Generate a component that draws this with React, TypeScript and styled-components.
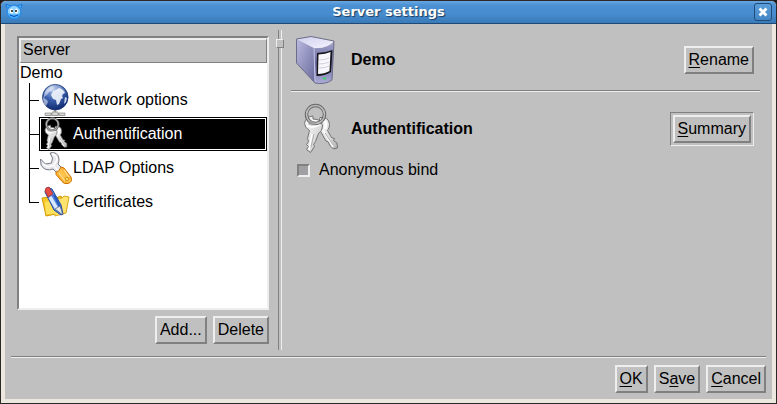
import React, { useState } from 'react';
import styled, { createGlobalStyle, css } from 'styled-components';

const GlobalStyle = createGlobalStyle`
  * { box-sizing: border-box; }
  body { margin: 0; background: #1c1a1c; }
  button, input { font: inherit; color: inherit; margin: 0; }
  svg { display: block; flex: none; overflow: visible; }
`;

const face = '#c0c0c0';
const light = '#eeeeee';
const dark = '#808080';

const raised = css`
  border: 2px solid;
  border-color: ${light} ${dark} ${dark} ${light};
`;

const Window = styled.div`
  min-height: 100vh;
  display: flex;
  flex-direction: column;
  border: 1px solid #2c2828;
  border-radius: 6px 6px 0 0;
  background: #ece8e0;
  font-family: 'Liberation Sans', Arial, sans-serif;
  font-size: 16px;
  line-height: 20px;
  color: #000;
`;

const TitleBar = styled.header`
  display: flex;
  align-items: center;
  justify-content: space-between;
  height: 23px;
  padding: 0 4px;
  border-bottom: 1px solid #1f4a78;
  border-radius: 5px 5px 0 0;
  background: linear-gradient(#68a8e2, #4a90d2 20%, #468cce 60%, #3a7ab8);
`;

const Title = styled.h1`
  margin: 0;
  font: bold 13px/20px 'DejaVu Sans', sans-serif;
  color: #fff;
  text-shadow: 1px 1px 1px #1c3c60;
`;

const CloseButton = styled.button`
  display: grid;
  place-items: center;
  width: 18px;
  height: 18px;
  padding: 0;
  border: 1px solid #1f4a78;
  border-radius: 3px;
  background: linear-gradient(#5a9edc, #4286c6);
`;

const Client = styled.main`
  flex: 1;
  display: flex;
  flex-direction: column;
  margin: 0 4px 4px;
  padding: 6px;
  background: ${face};
`;

const Panes = styled.div`
  flex: 1;
  display: flex;
`;

const Sidebar = styled.nav`
  display: flex;
  flex-direction: column;
  gap: 6px;
  width: 265px;
  padding: 6px 7px 6px 6px;
`;

const Tree = styled.div`
  flex: 1;
  border: 2px solid;
  border-color: ${dark} ${light} ${light} ${dark};
  background: #fff;
`;

const TreeHeader = styled.div`
  ${raised}
  border-right-width: 1px;
  border-bottom-width: 1px;
  padding: 0 2px 2px;
  background: ${face};
`;

const TreeRoot = styled.div`
  height: 20px;
  padding-left: 1px;
`;

const TreeList = styled.ul`
  list-style: none;
  margin: 0;
  padding: 0 0 0 10px;
`;

const TreeRow = styled.li`
  display: flex;
  height: 34px;
`;

const Connector = styled.span<{ $last: boolean }>`
  display: flex;
  flex-direction: column;
  width: 10px;
  &::before,
  &::after {
    content: '';
    flex: 1;
    border-left: 1px solid #000;
  }
  &::before { border-bottom: 1px solid #000; }
  &::after { border-left-color: ${(p) => (p.$last ? 'transparent' : '#000')}; }
`;

const TreeItem = styled.button<{ $selected: boolean }>`
  flex: 1;
  display: flex;
  align-items: center;
  gap: 1px;
  padding: 0;
  border: 1px solid ${(p) => (p.$selected ? '#000' : 'transparent')};
  box-shadow: ${(p) => (p.$selected ? 'inset 0 0 0 1px #fff' : 'none')};
  background: ${(p) => (p.$selected ? '#000' : 'transparent')};
  color: ${(p) => (p.$selected ? '#fff' : '#000')};
  text-align: left;
`;

const ButtonRow = styled.div`
  display: flex;
  justify-content: flex-end;
  gap: 6px;
`;

const Button = styled.button`
  ${raised}
  padding: 2px 3px;
  background: ${face};
  line-height: 20px;
  u {
    text-decoration-thickness: 1px;
    text-underline-offset: 2px;
    text-decoration-skip-ink: none;
  }
`;

const DefaultRing = styled.span`
  display: flex;
  padding: 2px;
  border: 1px solid;
  border-color: ${dark} ${light} ${light} ${dark};
`;

const Splitter = styled.div`
  display: flex;
  flex-direction: column;
  align-items: center;
  width: 8px;
  &::before,
  &::after {
    content: '';
    width: 2px;
    height: 9px;
    border-left: 1px solid ${dark};
    border-right: 1px solid ${light};
  }
  &::after { flex: 1; }
`;

const Grip = styled.span`
  width: 8px;
  height: 9px;
  border: 1px solid;
  border-color: ${light} ${dark} ${dark} ${light};
`;

const Details = styled.section`
  flex: 1;
  padding: 6px 6px 0 7px;
`;

const Rule = styled.hr`
  width: 100%;
  margin: 0;
  border: 0;
  border-top: 1px solid ${dark};
  border-bottom: 1px solid ${light};
`;

const Heading = styled.div`
  display: flex;
  align-items: center;
  gap: 6px;
  padding: 0 6px 6px;
`;

const HeadingText = styled.h2`
  flex: 1;
  margin: 0;
  font-size: 16px;
  line-height: 20px;
`;

const Section = styled.div`
  padding-top: 13px;
`;

const CheckLabel = styled.label`
  display: flex;
  align-items: center;
  gap: 9px;
  padding: 1px 6px;
`;

const CheckBox = styled.input`
  appearance: none;
  width: 13px;
  height: 13px;
  border: 2px solid;
  border-color: ${dark} ${light} ${light} ${dark};
  background: #a0a0a4;
  &:checked { background: #303030; }
`;

const Footer = styled.footer`
  display: flex;
  flex-direction: column;
  gap: 7px;
  padding-top: 6px;
`;

const Mascot = () => (
  <svg width="18" height="18" viewBox="0 0 18 18" aria-hidden="true">
    <path d="M2 5L1 1l4 2M16 5l1-4-4 2" fill="#4bb0ff" stroke="#1a78dc" />
    <circle cx="9" cy="9" r="7" fill="#42aaff" stroke="#2585e4" />
    <path d="M3 7q6-8 12 0v3q-6 3-12 0z" fill="#92d4ff" />
    <ellipse cx="6.5" cy="8" rx="1.500" ry="2.500" fill="#fff" />
    <ellipse cx="11.5" cy="8" rx="1.500" ry="2.500" fill="#fff" />
    <circle cx="7" cy="8" r="1" fill="#111" />
    <circle cx="11" cy="8" r="1" fill="#111" />
    <path d="M5 12q4 3 8 0" fill="none" stroke="#0b50b0" />
  </svg>
);

const CloseIcon = () => (
  <svg width="10" height="10" viewBox="0 0 10 10" aria-hidden="true">
    <path d="M1.500 1.500l7 7m0-7l-7 7" stroke="#fff" strokeWidth="2.800" />
  </svg>
);

const GlobeIcon = () => (
  <svg width="32" height="32" viewBox="0 0 32 32" aria-hidden="true">
    <defs>
      <radialGradient id="sea" cx="0.4" cy="0.2" r="0.85">
        <stop offset="0" stopColor="#a9bfe6" />
        <stop offset="0.45" stopColor="#3d62b0" />
        <stop offset="1" stopColor="#0b2468" />
      </radialGradient>
    </defs>
    <path d="M15 26v4M6 30.300h19" stroke="#a5a7a3" strokeWidth="2.500" />
    <path d="M5 29h6v2.500H5zM19 29h6v2.500h-6zM12 28h6v3.500h-6z" fill="#d5d7d3" stroke="#858784" strokeWidth="0.700" />
    <circle cx="15.300" cy="13.200" r="12.800" fill="url(#sea)" stroke="#132e70" strokeWidth="0.700" />
    <path d="M5 8q3-5 8-6l1 2-2 2 0 1-3 1-2 3-2 1-1 2 3 2 1 2-2 4q-3-3-3-7z" fill="#dfe7f5" opacity="0.600" />
    <path d="M13 7l3-1 3-2q4 1 6 5l-2 1-1 2 1 2-2 1-2 5-2 1-1-5-3-1-2-4z" fill="#eef3fb" opacity="0.920" />
    <path d="M25 13l2 1-1 4-2 2z" fill="#cbd9f0" />
    <path d="M4 10Q7 1 15 1t11 8Q15 4 4 10z" fill="#fff" opacity="0.250" />
  </svg>
);

const KeysIcon = ({ size }: { size: number }) => (
  <svg width={size} height={size} viewBox="0 0 48 48" aria-hidden="true">
    <defs>
      <linearGradient id="steel" x1="0" y1="0" x2="1" y2="1">
        <stop offset="0" stopColor="#fafafa" />
        <stop offset="0.600" stopColor="#dcdcdc" />
        <stop offset="1" stopColor="#b0b0b0" />
      </linearGradient>
    </defs>
    <g fill="url(#steel)" stroke="#747474" strokeLinejoin="round">
      <path d="M23 12.500q9-1 9.500 7 0 4-2 6l4 7 3 1-1 2 3.500 2.500.5 5-4 1-4-4-1-3-2.500-1-8-14z" />
      <path d="M16 14q9 0 9.500 7 0 5-4 7.500l-3 8-2 3 1 2-4 6-4-3 2-3-2-2 2-3-1-3 2-8q-5-3-5-7 1-7 8.500-7.500z" />
    </g>
    <path d="M26 25l10 17M15 29l-3 16" fill="none" stroke="#fff" strokeWidth="1.500" />
    <path d="M28 28l8 12M17 29l-3 13" fill="none" stroke="#b0b0b0" />
    <path d="M9.500 21q1-6 7-6t7 5q-7 5-14 1z" fill="#fff" />
    <path d="M25 15q6 1 3 9" fill="none" stroke="#fff" strokeWidth="2.500" />
    <circle cx="18.500" cy="9.500" r="9" fill="none" stroke="#686868" strokeWidth="3.500" />
    <circle cx="18.500" cy="9.500" r="9" fill="none" stroke="#bdbdbd" strokeWidth="1.500" />
    <path d="M12 15.500l-1 4q3 2 7 .5l1-3z" fill="#969696" opacity="0.650" />
  </svg>
);

const WrenchIcon = () => (
  <svg width="32" height="32" viewBox="0 0 32 32" aria-hidden="true">
    <defs>
      <linearGradient id="amber" x1="0" y1="1" x2="1" y2="0">
        <stop offset="0" stopColor="#ee8b08" />
        <stop offset="0.500" stopColor="#ffc54d" />
        <stop offset="1" stopColor="#f09010" />
      </linearGradient>
    </defs>
    <path d="M10 1q8-2 9 6 0 3-1 5l5 5-5 5-5-5q-8 3-12-4l-.5-6 5 5 6-1 1-5z" fill="#e8e8ec" stroke="#777b86" strokeLinejoin="round" />
    <path d="M12 2q5 1 5 6l-3 5-6 2-5-3M14 14l5 5" fill="none" stroke="#fff" strokeWidth="1.500" />
    <path d="M16 20q3 0 5-5l3 1 7 9q2 5-3 6.500-4 1-6-2l-6-7z" fill="url(#amber)" stroke="#ce7603" />
    <path d="M19 21l6 8M24 18l5 7" stroke="#ffe199" strokeWidth="1.200" />
    <circle cx="27" cy="27" r="1.700" fill="#ffe066" stroke="#bd7400" strokeWidth="0.700" />
  </svg>
);

const CertificateIcon = () => (
  <svg width="32" height="32" viewBox="0 0 32 32" aria-hidden="true">
    <path d="M2 12l8-1 3 2 8-3 5 16-20 4z" fill="#f7c928" stroke="#d29a08" />
    <path d="M15 13l7-1 2-2 5 1-3 16-11 3z" fill="#ffe36e" stroke="#dda719" />
    <path d="M5 16l10-2 8 14H6z" fill="#ffe05a" />
    <path d="M5 6q1-6 7-3l9 16 2 9-2 1-7-5z" fill="#5284df" stroke="#234b9f" />
    <path d="M10 11l7 12" stroke="#d9e8ff" strokeWidth="3.500" />
    <path d="M14 9l6 12" stroke="#2858ba" strokeWidth="2" />
    <path d="M5 5q0-4 4-4l4 7-5 3z" fill="#e84b42" stroke="#983039" strokeWidth="0.700" />
    <path d="M15 23l5-3 3 9z" fill="#e5e7ea" stroke="#53617b" strokeWidth="0.700" />
  </svg>
);

const ServerIcon = () => (
  <svg width="48" height="48" viewBox="0 0 48 48" aria-hidden="true">
    <defs>
      <linearGradient id="side" x1="0" y1="0" x2="1" y2="1">
        <stop offset="0" stopColor="#b9b9e0" />
        <stop offset="1" stopColor="#6a6a9b" />
      </linearGradient>
      <linearGradient id="front" x1="0" y1="0" x2="0" y2="1">
        <stop offset="0" stopColor="#a4a4cc" />
        <stop offset="0.500" stopColor="#6868a0" />
        <stop offset="1" stopColor="#aeaed8" />
      </linearGradient>
      <linearGradient id="lid" x1="0" y1="0" x2="1" y2="1">
        <stop offset="0" stopColor="#cfcfee" />
        <stop offset="1" stopColor="#f4f4ff" />
      </linearGradient>
    </defs>
    <path d="M-.5 3L17 12l1 35L-.5 27z" fill="url(#side)" />
    <path d="M17 12q12 1 20-6l-2 38q-7 5-17 3z" fill="url(#front)" />
    <path d="M-.5 3L14 .5 37 5q-7 8-20 7z" fill="url(#lid)" />
    <path d="M-.5 3L14 .5 37 5l-2 39q-7 5-17 3L-.5 27z" fill="none" stroke="#6c6c88" />
    <path d="M17 12l1 34" stroke="#c4c4e8" />
    <path d="M20 17q8 0 15.500-3L34 36q-6 4-14.500 4z" fill="#141419" />
    <path d="M21.500 18.500q7-.5 12-2.500l-1 19q-5 3-11.500 3z" fill="#f7f7fc" />
    <path d="M22 24q6 0 10-2M22 28q6 0 10-2M22 32q6 0 10-2" fill="none" stroke="#d0d0df" />
    <path d="M26 42.500h3" stroke="#3fd463" strokeWidth="2" />
  </svg>
);

const entries = [
  { label: 'Network options', icon: <GlobeIcon /> },
  { label: 'Authentification', icon: <KeysIcon size={32} /> },
  { label: 'LDAP Options', icon: <WrenchIcon /> },
  { label: 'Certificates', icon: <CertificateIcon /> },
];

export default function App() {
  const [selected, setSelected] = useState(1);
  return (
    <>
      <GlobalStyle />
      <Window>
        <TitleBar>
          <Mascot />
          <Title>Server settings</Title>
          <CloseButton aria-label="Close">
            <CloseIcon />
          </CloseButton>
        </TitleBar>
        <Client>
          <Panes>
            <Sidebar>
              <Tree>
                <TreeHeader>Server</TreeHeader>
                <TreeRoot>Demo</TreeRoot>
                <TreeList>
                  {entries.map((entry, i) => (
                    <TreeRow key={entry.label}>
                      <Connector $last={i === entries.length - 1} />
                      <TreeItem $selected={i === selected} onClick={() => setSelected(i)}>
                        {entry.icon}
                        {entry.label}
                      </TreeItem>
                    </TreeRow>
                  ))}
                </TreeList>
              </Tree>
              <ButtonRow>
                <Button>Add...</Button>
                <Button>Delete</Button>
              </ButtonRow>
            </Sidebar>
            <Splitter>
              <Grip />
            </Splitter>
            <Details>
              <Heading>
                <ServerIcon />
                <HeadingText>Demo</HeadingText>
                <Button><u>R</u>ename</Button>
              </Heading>
              <Rule />
              <Section>
                <Heading>
                  <KeysIcon size={48} />
                  <HeadingText>Authentification</HeadingText>
                  <DefaultRing>
                    <Button><u>S</u>ummary</Button>
                  </DefaultRing>
                </Heading>
                <CheckLabel>
                  <CheckBox type="checkbox" />
                  Anonymous bind
                </CheckLabel>
              </Section>
            </Details>
          </Panes>
          <Footer>
            <Rule />
            <ButtonRow>
              <Button><u>O</u>K</Button>
              <Button>S<u>a</u>ve</Button>
              <Button><u>C</u>ancel</Button>
            </ButtonRow>
          </Footer>
        </Client>
      </Window>
    </>
  );
}
